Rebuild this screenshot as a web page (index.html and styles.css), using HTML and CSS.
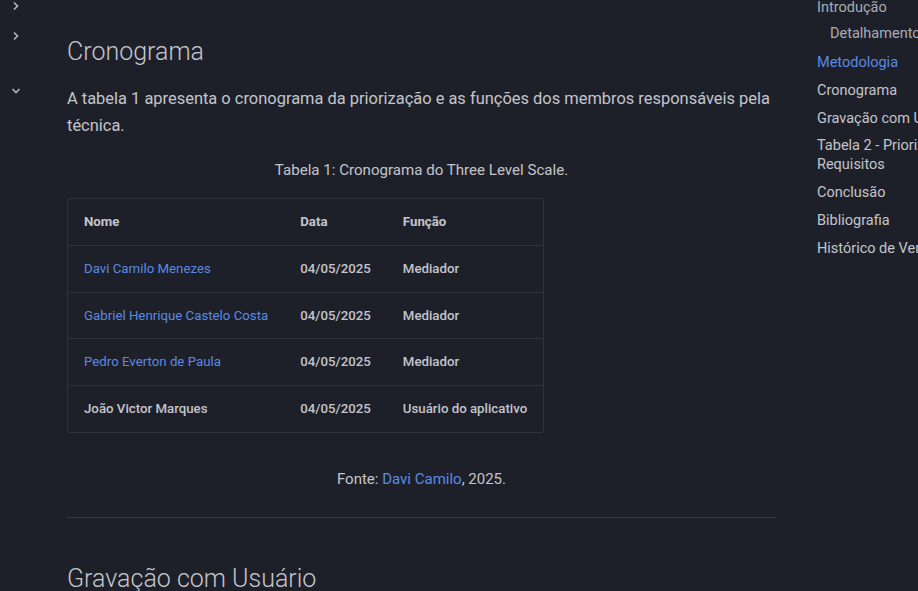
FILE: index.html
```html
<!DOCTYPE html>
<html lang="pt-BR">
<head>
<meta charset="utf-8">
<title>Cronograma</title>
<link rel="stylesheet" href="styles.css">
</head>
<body>
<div class="page">
  <nav class="sidebar">
    <span class="chev chev-1"><svg viewBox="0 0 10 10" width="10" height="10"><path d="M3 1.5 L6.5 5 L3 8.5" fill="none" stroke="currentColor" stroke-width="1.6"/></svg></span>
    <span class="chev chev-2"><svg viewBox="0 0 10 10" width="10" height="10"><path d="M3 1.5 L6.5 5 L3 8.5" fill="none" stroke="currentColor" stroke-width="1.6"/></svg></span>
    <span class="chev chev-3"><svg viewBox="0 0 10 10" width="10" height="10"><path d="M1.5 3 L5 6.5 L8.5 3" fill="none" stroke="currentColor" stroke-width="1.6"/></svg></span>
  </nav>
  <main class="content">
    <h2 class="h2 h2-first">Cronograma</h2>
    <p class="para">A tabela 1 apresenta o cronograma da priorização e as funções dos membros responsáveis pela técnica.</p>
    <p class="caption">Tabela 1: Cronograma do Three Level Scale.</p>
    <div class="table-wrap">
      <table class="tbl">
        <thead>
          <tr><th>Nome</th><th>Data</th><th>Função</th></tr>
        </thead>
        <tbody>
          <tr><td><a href="#">Davi Camilo Menezes</a></td><td>04/05/2025</td><td>Mediador</td></tr>
          <tr><td><a href="#">Gabriel Henrique Castelo Costa</a></td><td>04/05/2025</td><td>Mediador</td></tr>
          <tr><td><a href="#">Pedro Everton de Paula</a></td><td>04/05/2025</td><td>Mediador</td></tr>
          <tr><td>João Victor Marques</td><td>04/05/2025</td><td>Usuário do aplicativo</td></tr>
        </tbody>
      </table>
    </div>
    <p class="source">Fonte: <a href="#">Davi Camilo</a>, 2025.</p>
    <hr class="rule">
    <h2 class="h2 h2-second">Gravação com Usuário</h2>
  </main>
  <aside class="toc">
    <a class="toc-item" href="#">Introdução</a>
    <a class="toc-item toc-sub" href="#">Detalhamento da Técnica</a>
    <a class="toc-item toc-active" href="#">Metodologia</a>
    <a class="toc-item" href="#">Cronograma</a>
    <a class="toc-item" href="#">Gravação com Usuário</a>
    <a class="toc-item toc-wrap" href="#">Tabela 2 - Priorização dos Requisitos</a>
    <a class="toc-item" href="#">Conclusão</a>
    <a class="toc-item" href="#">Bibliografia</a>
    <a class="toc-item" href="#">Histórico de Versões</a>
  </aside>
</div>
</body>
</html>
```

FILE: styles.css
```css
html, body {
  margin: 0;
  padding: 0;
  background: #1e2029;
  overflow: hidden;
  height: 591px;
}
body {
  font-family: Roboto, "Noto Sans", Arial, sans-serif;
  color: #c3c5cc;
  -webkit-font-smoothing: antialiased;
}
a { color: #5a8ae2; text-decoration: none; }

.page {
  display: flex;
  align-items: flex-start;
  width: 1100px;
}

.sidebar {
  width: 43px;
  flex: none;
  display: flex;
  flex-direction: column;
  color: #b4b7c2;
}
.chev { display: block; width: 10px; height: 10px; margin-left: 11px; }
.chev svg { display: block; }
.chev-1 { margin-top: 1px; }
.chev-2 { margin-top: 20px; }
.chev-3 { margin-top: 45px; }

.content {
  width: 709px;
  flex: none;
  padding: 0 24px;
}

.h2 {
  font-size: 25px;
  font-weight: 300;
  line-height: 35px;
  margin: 0;
  color: #c3c5cc;
}
.h2-first { margin-top: 34px; }
.h2-second { margin-top: 43px; }

.para {
  font-size: 16.45px;
  line-height: 27px;
  margin: 16px 0 0;
}

.caption {
  text-align: center;
  font-size: 15.1px;
  line-height: 22px;
  margin: 20px 0 0;
}

.table-wrap {
  margin-top: 17px;
  display: flex;
}
.tbl {
  border-collapse: separate;
  border-spacing: 0;
  border: 1px solid #2f323d;
  border-radius: 2px;
  font-size: 13.25px;
  line-height: 19.8px;
}
.tbl th, .tbl td {
  text-align: left;
  padding: 13px 16px;
  white-space: nowrap;
}
.tbl th {
  font-weight: 700;
  color: #c3c5cc;
}
.tbl td {
  border-top: 1px solid #2f323d;
  font-weight: 500;
  color: #c3c5cc;
}
.tbl td a { font-weight: 400; }

.source {
  text-align: center;
  font-size: 15px;
  line-height: 22px;
  margin: 35px 0 0;
}
.source a { font-weight: 400; }

.rule {
  border: 0;
  border-top: 1px solid #363945;
  margin: 27px 0 0;
  height: 0;
}

.toc {
  flex: none;
  width: 186px;
  margin-left: 17px;
  display: flex;
  flex-direction: column;
  gap: 9px;
  margin-top: -2px;
}
.toc-item {
  display: block;
  font-size: 14.5px;
  line-height: 19px;
  color: #c3c5cc;
}
.toc-item:first-child { color: #a9acb5; }
.toc-sub { padding-left: 13px; color: #a9acb5; margin-top: -2px; }
.toc-active { color: #5a8ae2; margin-top: 1px; }
.toc-wrap { margin-top: -1px; }
```
